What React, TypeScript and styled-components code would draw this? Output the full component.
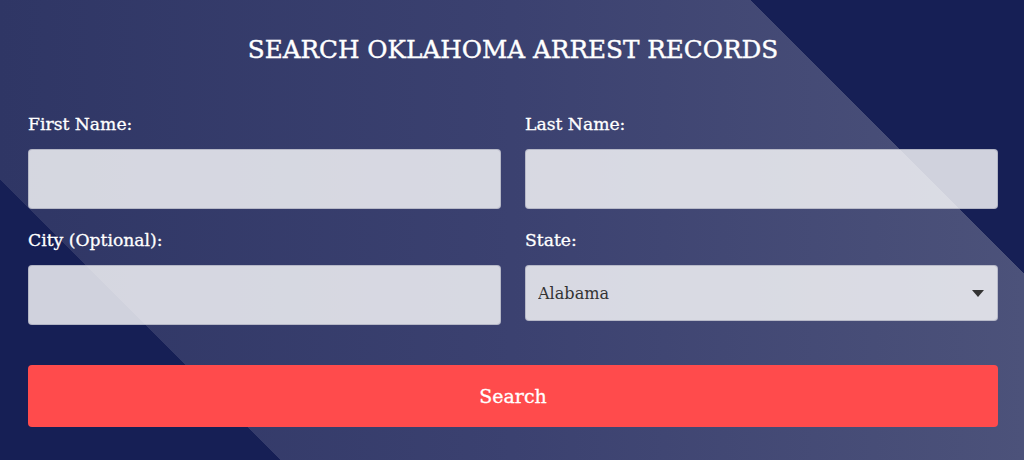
import React from "react";
import styled, { createGlobalStyle } from "styled-components";

const Global = createGlobalStyle`
  html, body { margin: 0; padding: 0; }
  body { font-family: "DejaVu Serif", "Liberation Serif", serif; background: #161f55; }
  * { box-sizing: border-box; }
`;

const Page = styled.div`
  width: 1024px;
  height: 460px;
  padding: 34px 26px 0 28px;
  background:
    linear-gradient(45deg, #161f55 198px, transparent 198px, transparent 856px, #161f55 856px),
    linear-gradient(90deg, #2f3665 0%, #3b4170 50%, #4c527a 100%);
  color: #fff;
  overflow: hidden;
`;

const Title = styled.h1`
  margin: 0;
  text-align: center;
  font-family: "DejaVu Serif", serif;
  font-weight: 400;
  font-size: 24.7px;
  line-height: 32px;
  color: #ffffff;
  -webkit-text-stroke: 0.4px #ffffff;
`;

const Grid = styled.form`
  margin-top: 46px;
  display: grid;
  grid-template-columns: 1fr 1fr;
  column-gap: 24px;
  row-gap: 19px;
  align-items: start;
`;

const Field = styled.div`
  display: flex;
  flex-direction: column;
  gap: 13px;
`;

const Label = styled.label`
  font-family: "DejaVu Serif", serif;
  font-size: 17.2px;
  line-height: 24px;
  color: #ffffff;
  -webkit-text-stroke: 0.3px #ffffff;
`;

const Input = styled.input`
  height: 60px;
  width: 100%;
  border: 1px solid rgba(120, 124, 150, 0.35);
  border-radius: 4px;
  background: rgba(255, 255, 255, 0.8);
  padding: 0 12px;
  font-family: "DejaVu Serif", serif;
  font-size: 16px;
  color: #333;
  outline: none;
`;

const SelectWrap = styled.div`
  position: relative;
  &::after {
    content: "";
    position: absolute;
    right: 14px;
    top: 25px;
    border-left: 6px solid transparent;
    border-right: 6px solid transparent;
    border-top: 7px solid #333;
    pointer-events: none;
  }
`;

const Select = styled.select`
  appearance: none;
  -webkit-appearance: none;
  height: 56px;
  width: 100%;
  border: 1px solid rgba(120, 124, 150, 0.35);
  border-radius: 4px;
  background: rgba(255, 255, 255, 0.8);
  padding: 0 12px;
  font-family: "DejaVu Serif", serif;
  font-size: 16.1px;
  color: #333;
  outline: none;
`;

const Button = styled.button`
  grid-column: 1 / -1;
  margin-top: 21px;
  height: 62px;
  width: 100%;
  border: none;
  border-radius: 4px;
  background: #ff4b4c;
  color: #fff;
  font-family: "DejaVu Serif", serif;
  font-size: 19px;
  -webkit-text-stroke: 0.3px #ffffff;
  cursor: pointer;
`;

export default function App() {
  return (
    <>
      <Global />
      <Page>
        <Title>SEARCH OKLAHOMA ARREST RECORDS</Title>
        <Grid onSubmit={(e) => e.preventDefault()}>
          <Field>
            <Label htmlFor="fn">First Name:</Label>
            <Input id="fn" />
          </Field>
          <Field>
            <Label htmlFor="ln">Last Name:</Label>
            <Input id="ln" />
          </Field>
          <Field>
            <Label htmlFor="city">City (Optional):</Label>
            <Input id="city" />
          </Field>
          <Field>
            <Label htmlFor="st">State:</Label>
            <SelectWrap>
              <Select id="st" defaultValue="Alabama">
                <option>Alabama</option>
                <option>Alaska</option>
                <option>Arizona</option>
                <option>Oklahoma</option>
              </Select>
            </SelectWrap>
          </Field>
          <Button type="submit">Search</Button>
        </Grid>
      </Page>
    </>
  );
}
